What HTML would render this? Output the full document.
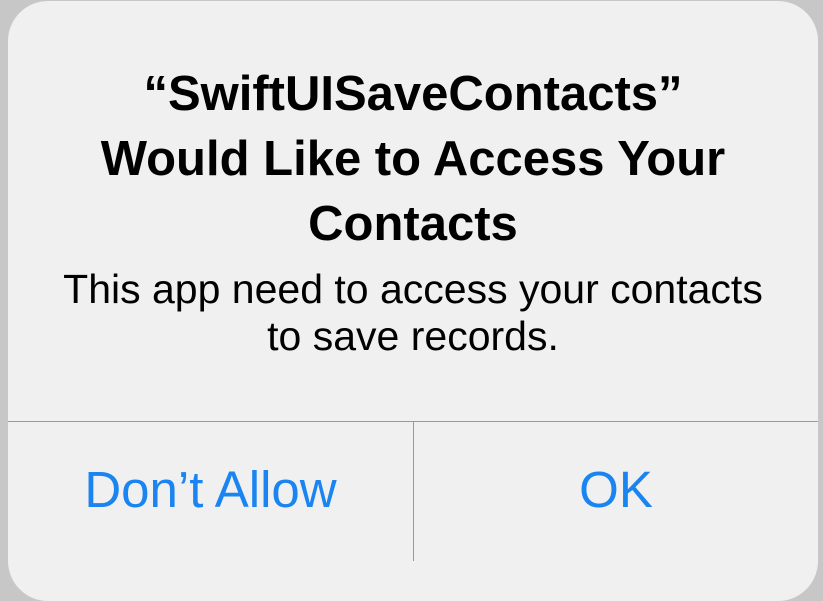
<!DOCTYPE html>
<html><head><style>
html,body{margin:0;padding:0;width:823px;height:552px;overflow:hidden;background:#c7c7c7;font-family:"Liberation Sans",sans-serif;}
.p{position:absolute;left:8px;top:1px;width:810px;height:600px;background:#eff0ef;border-radius:40px;}
.t{position:absolute;left:0;width:826px;text-align:center;color:#000;white-space:nowrap;}
.h{font-weight:bold;font-size:49px;line-height:65px;top:62px;}
.m{font-size:41px;line-height:47px;top:266px;}
.hl{position:absolute;left:8px;width:810px;top:421px;height:1px;background:#999;}
.vl{position:absolute;left:413px;top:421px;width:1px;height:140px;background:#999;}
.b{position:absolute;top:460px;font-size:51px;color:#1a84f0;line-height:60px;text-align:center;}
</style></head><body>
<div class="p"></div>
<div class="t h">“SwiftUISaveContacts”<br>Would Like to Access Your<br>Contacts</div>
<div class="t m">This app need to access your contacts<br>to save records.</div>
<div class="hl"></div><div class="vl"></div>
<div class="b" style="left:8px;width:405px">Don’t Allow</div>
<div class="b" style="left:414px;width:404px">OK</div>
</body></html>
